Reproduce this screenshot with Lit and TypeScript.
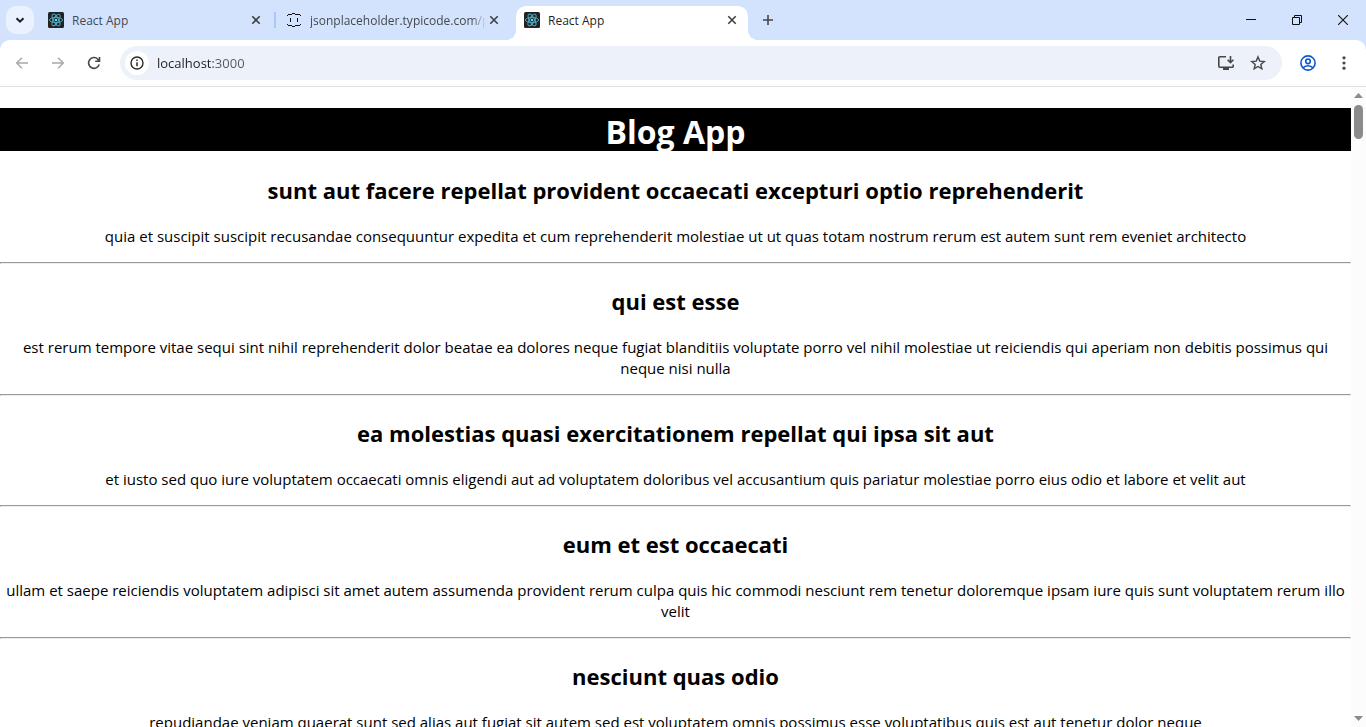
import { LitElement, html, svg, css } from "lit";
import { customElement, property } from "lit/decorators.js";
import { classMap } from "lit/directives/class-map.js";

const reactIcon = html`<svg class="favicon" width="16" height="16" viewBox="0 0 16 16" aria-hidden="true">
  <rect width="16" height="16" rx="1.5" fill="#222" />
  <g fill="none" stroke="#4fb0cb" stroke-width="0.9">
    ${[0, 60, 120].map((a) => svg`<ellipse cx="8" cy="8" rx="6.6" ry="2.6" transform=${`rotate(${a} 8 8)`} />`)}
  </g>
  <circle cx="8" cy="8" r="1.3" fill="#61dafb" />
</svg>`;

const bracesIcon = html`<svg class="favicon" width="16" height="16" viewBox="0 0 16 16" aria-hidden="true" shape-rendering="crispEdges">
  <path
    d="M2 2h4v1H2zM6 1h3v1H6zM9 2h5v1H9zM1 3h1v1H1zM14 3h1v1h-1zM1 12h1v1H1zM14 12h1v1h-1zM2 13h4v1H2zM9 13h5v1H9zM6 14h3v1H6zM4 6h1v4H4zM11 6h1v4h-1z"
    fill="#111"
  />
</svg>`;

@customElement("browser-tab")
export class BrowserTab extends LitElement {
  @property() label = "";
  @property() icon = "react";
  @property({ type: Boolean }) active = false;

  static styles = css`
    :host {
      display: block;
      flex: 0 1 232px;
      min-width: 0;
    }
    .tab {
      display: flex;
      align-items: center;
      height: 34px;
      padding: 0 8px 6px;
      box-sizing: border-box;
      position: relative;
      color: #45494f;
    }
    .active {
      background: #fff;
      color: #1f1f1f;
      border-radius: 10px 10px 0 0;
    }
    .active::before,
    .active::after {
      content: "";
      position: absolute;
      bottom: 0;
      width: 10px;
      height: 10px;
    }
    .active::before {
      left: -10px;
      background: radial-gradient(circle at 0 0, transparent 10px, #fff 10px);
    }
    .active::after {
      right: -10px;
      background: radial-gradient(circle at 100% 0, transparent 10px, #fff 10px);
    }
    .favicon {
      flex: none;
      display: block;
    }
    .title {
      flex: 1;
      min-width: 0;
      margin-left: 8px;
      padding-top: 2px;
      overflow: hidden;
      white-space: nowrap;
      font-size: 12px;
      line-height: 18px;
    }
    .fade {
      -webkit-mask-image: linear-gradient(to right, #000 92%, transparent);
      mask-image: linear-gradient(to right, #000 92%, transparent);
    }
    button {
      flex: none;
      display: grid;
      place-items: center;
      width: 16px;
      height: 16px;
      padding: 0;
      border: 0;
      background: none;
      color: #3c4043;
    }
  `;

  render() {
    return html`<div class=${classMap({ tab: true, active: this.active })}>
      ${this.icon === "react" ? reactIcon : bracesIcon}
      <span class=${classMap({ title: true, fade: this.icon !== "react" })}>${this.label}</span>
      <button aria-label="Close tab">
        <svg width="16" height="16" viewBox="0 0 16 16"><path d="M4.3 4.3l7.4 7.4M11.7 4.3l-7.4 7.4" stroke="currentColor" stroke-width="1.6" /></svg>
      </button>
    </div>`;
  }
}

@customElement("browser-frame")
export class BrowserFrame extends LitElement {
  static styles = css`
    :host {
      display: block;
      background: #d3e3fd;
    }
    .strip {
      display: flex;
      align-items: flex-start;
      height: 34px;
      padding: 6px 0 0 6px;
    }
    button {
      display: grid;
      place-items: center;
      flex: none;
      padding: 0;
      border: 0;
      background: none;
      color: #474747;
    }
    svg {
      display: block;
    }
    .search {
      width: 28px;
      height: 28px;
      border-radius: 10px;
      background: #ebf2ff;
      color: #1f1f1f;
      margin-right: 6px;
    }
    .tabs {
      display: flex;
      flex: 0 1 708px;
      min-width: 0;
    }
    .gap {
      flex: none;
      width: 6px;
      height: 16px;
      margin-top: 6px;
      display: flex;
      justify-content: center;
    }
    .line {
      width: 2px;
      background: #a8c7fa;
    }
    .new {
      width: 28px;
      height: 28px;
      margin-left: 6px;
    }
    .window {
      display: flex;
      margin-left: auto;
    }
    .window button {
      width: 46px;
      height: 28px;
      color: #111;
    }
    .toolbar {
      display: flex;
      align-items: center;
      background: #fff;
      height: 46px;
      border-radius: 10px 10px 0 0;
      border-bottom: 1px solid #dfe1e5;
      padding: 0 8px;
    }
    .nav {
      display: flex;
      gap: 8px;
    }
    .nav button,
    .side button {
      width: 28px;
      height: 28px;
    }
    .nav .off {
      color: #a9a9a9;
    }
    .side {
      display: flex;
      gap: 8px;
      margin-left: 12px;
    }
    .box {
      flex: 1;
      min-width: 0;
      display: flex;
      align-items: center;
      height: 34px;
      margin-left: 12px;
      padding: 0 10px 0 5px;
      border-radius: 17px;
      background: #ecf1fa;
    }
    .box button {
      width: 28px;
      height: 28px;
      margin-left: 4px;
    }
    .box .info {
      width: 24px;
      height: 24px;
      margin-left: 0;
      border-radius: 50%;
      background: #fff;
      color: #2b2b2b;
    }
    .url {
      flex: 1;
      min-width: 0;
      margin: 0 0 0 8px;
      padding: 0;
      border: 0;
      outline: 0;
      font: inherit;
      font-size: 13px;
      line-height: 20px;
      color: transparent;
      background: linear-gradient(to right, #1f1f1f 56px, #54575c 56px);
      -webkit-background-clip: text;
      background-clip: text;
    }
    .me {
      color: #0b57d0;
    }
  `;

  render() {
    return html`
      <div class="strip">
        <button class="search" aria-label="Search tabs">
          <svg width="12" height="12" viewBox="0 0 12 12"><path d="M2.5 4.2L6 7.7l3.5-3.5" fill="none" stroke="currentColor" stroke-width="2" /></svg>
        </button>
        <div class="tabs">
          <browser-tab label="React App"></browser-tab>
          <div class="gap"><span class="line"></span></div>
          <browser-tab label="jsonplaceholder.typicode.com/p" icon="braces"></browser-tab>
          <div class="gap"></div>
          <browser-tab label="React App" active></browser-tab>
        </div>
        <button class="new" aria-label="New tab">
          <svg width="12" height="12" viewBox="0 0 12 12"><path d="M6 1v10M1 6h10" stroke="currentColor" stroke-width="1.6" /></svg>
        </button>
        <div class="window">
          <button aria-label="Minimize">
            <svg width="10" height="10" viewBox="0 0 10 10"><path d="M0 4.5h10" stroke="currentColor" /></svg>
          </button>
          <button aria-label="Restore">
            <svg width="10" height="10" viewBox="0 0 10 10"><path d="M.5 2.5h7v7h-7zM2.5 2.5v-2h7v7h-2" fill="none" stroke="currentColor" /></svg>
          </button>
          <button aria-label="Close">
            <svg width="10" height="10" viewBox="0 0 10 10"><path d="M0 0l10 10M10 0L0 10" stroke="currentColor" stroke-width="1.1" /></svg>
          </button>
        </div>
      </div>
      <div class="toolbar">
        <div class="nav">
          <button class="off" aria-label="Back">
            <svg width="16" height="16" viewBox="0 0 16 16"><path d="M14 8H3M8 2.7L2.7 8 8 13.3" fill="none" stroke="currentColor" stroke-width="1.5" /></svg>
          </button>
          <button class="off" aria-label="Forward">
            <svg width="16" height="16" viewBox="0 0 16 16"><path d="M2 8h11M8 2.7L13.3 8 8 13.3" fill="none" stroke="currentColor" stroke-width="1.5" /></svg>
          </button>
          <button aria-label="Reload">
            <svg width="16" height="16" viewBox="0 0 16 16"><path d="M13.2 9.4A5.4 5.4 0 1 1 11.9 4.2L13.4 6M13.5 2v4.3H9.2" fill="none" stroke="currentColor" stroke-width="1.6" /></svg>
          </button>
        </div>
        <div class="box">
          <button class="info" aria-label="Site information">
            <svg width="14" height="14" viewBox="0 0 14 14"><circle cx="7" cy="7" r="6" fill="none" stroke="currentColor" stroke-width="1.4" /><path d="M7 6.2v4M7 3.6v1.5" stroke="currentColor" stroke-width="1.5" /></svg>
          </button>
          <input class="url" aria-label="Address" value="localhost:3000" />
          <button aria-label="Install app">
            <svg width="18" height="18" viewBox="0 0 18 18"><path d="M9 2.8H2.8a1 1 0 0 0-1 1v8.4a1 1 0 0 0 1 1h12.4a1 1 0 0 0 1-1V10.5" fill="none" stroke="currentColor" stroke-width="1.6" /><path d="M6 13h6v3H6z" fill="currentColor" /><path d="M13.5 2v6M10.6 5.7l2.9 2.9 2.9-2.9" fill="none" stroke="currentColor" stroke-width="1.6" /></svg>
          </button>
          <button aria-label="Bookmark">
            <svg width="16" height="16" viewBox="0 0 16 16"><path d="M8 1.9l1.75 4.2 4.5.35-3.45 2.95 1.05 4.4L8 11.45 4.15 13.8l1.05-4.4L1.75 6.45l4.5-.35z" fill="none" stroke="currentColor" stroke-width="1.4" /></svg>
          </button>
        </div>
        <div class="side">
          <button class="me" aria-label="Profile">
            <svg width="16" height="16" viewBox="0 0 16 16" fill="none" stroke="currentColor" stroke-width="1.6"><circle cx="8" cy="8" r="7.1" /><circle cx="8" cy="6.3" r="2.3" /><path d="M3 13c1.3-1.7 3-2.3 5-2.3s3.7.6 5 2.3" /></svg>
          </button>
          <button aria-label="Menu">
            <svg width="16" height="16" viewBox="0 0 16 16" fill="currentColor"><circle cx="8" cy="2.8" r="1.6" /><circle cx="8" cy="8" r="1.6" /><circle cx="8" cy="13.2" r="1.6" /></svg>
          </button>
        </div>
      </div>
    `;
  }
}

const posts = [
  {
    title: "sunt aut facere repellat provident occaecati excepturi optio reprehenderit",
    body: "quia et suscipit suscipit recusandae consequuntur expedita et cum reprehenderit molestiae ut ut quas totam nostrum rerum est autem sunt rem eveniet architecto",
  },
  {
    title: "qui est esse",
    body: "est rerum tempore vitae sequi sint nihil reprehenderit dolor beatae ea dolores neque fugiat blanditiis voluptate porro vel nihil molestiae ut reiciendis qui aperiam non debitis possimus qui neque nisi nulla",
  },
  {
    title: "ea molestias quasi exercitationem repellat qui ipsa sit aut",
    body: "et iusto sed quo iure voluptatem occaecati omnis eligendi aut ad voluptatem doloribus vel accusantium quis pariatur molestiae porro eius odio et labore et velit aut",
  },
  {
    title: "eum et est occaecati",
    body: "ullam et saepe reiciendis voluptatem adipisci sit amet autem assumenda provident rerum culpa quis hic commodi nesciunt rem tenetur doloremque ipsam iure quis sunt voluptatem rerum illo velit",
  },
  {
    title: "nesciunt quas odio",
    body: "repudiandae veniam quaerat sunt sed alias aut fugiat sit autem sed est voluptatem omnis possimus esse voluptatibus quis est aut tenetur dolor neque",
  },
];

@customElement("app-root")
export class AppRoot extends LitElement {
  static styles = css`
    :host {
      display: flex;
      flex-direction: column;
      height: 100vh;
      overflow: hidden;
      background: #fff;
      color: #000;
      font-family: "Segoe UI", "Open Sans", "Noto Sans", sans-serif;
    }
    browser-frame {
      flex: none;
    }
    .view {
      flex: 1;
      min-height: 0;
      display: flex;
    }
    main {
      flex: 1;
      min-width: 0;
      overflow: hidden;
      text-align: center;
    }
    h1 {
      margin: 21px 0 23px;
      padding-top: 4px;
      background: #000;
      color: #fff;
      font-size: 32px;
      line-height: 39px;
    }
    h2 {
      margin: 21px 0 20px;
      font-size: 22px;
      line-height: 32px;
    }
    p {
      margin: 15px 0;
      font-size: 15px;
      line-height: 21px;
    }
    hr {
      margin: 8px 0;
      border: 1px solid;
      border-color: #9a9a9a #eee #eee #9a9a9a;
    }
    .scroll {
      flex: none;
      width: 15px;
      background: #fcfcfc;
      display: flex;
      flex-direction: column;
      align-items: center;
    }
    .thumb {
      width: 9px;
      height: 34px;
      border-radius: 5px;
      background: #8b8b8b;
    }
    .arrow {
      display: block;
      height: 18px;
    }
    .down {
      margin-top: auto;
    }
  `;

  render() {
    return html`
      <browser-frame></browser-frame>
      <div class="view">
        <main>
          <h1>Blog App</h1>
          ${posts.map(
            (post) => html`<article>
              <h2>${post.title}</h2>
              <p>${post.body}</p>
              <hr />
            </article>`
          )}
        </main>
        <div class="scroll" aria-hidden="true">
          <svg class="arrow" width="9" height="18" viewBox="0 0 9 18"><path d="M4.5 6L9 11H0z" fill="#8b8b8b" /></svg>
          <div class="thumb"></div>
          <svg class="arrow down" width="9" height="18" viewBox="0 0 9 18"><path d="M4.5 12L9 7H0z" fill="#8b8b8b" /></svg>
        </div>
      </div>
    `;
  }
}
